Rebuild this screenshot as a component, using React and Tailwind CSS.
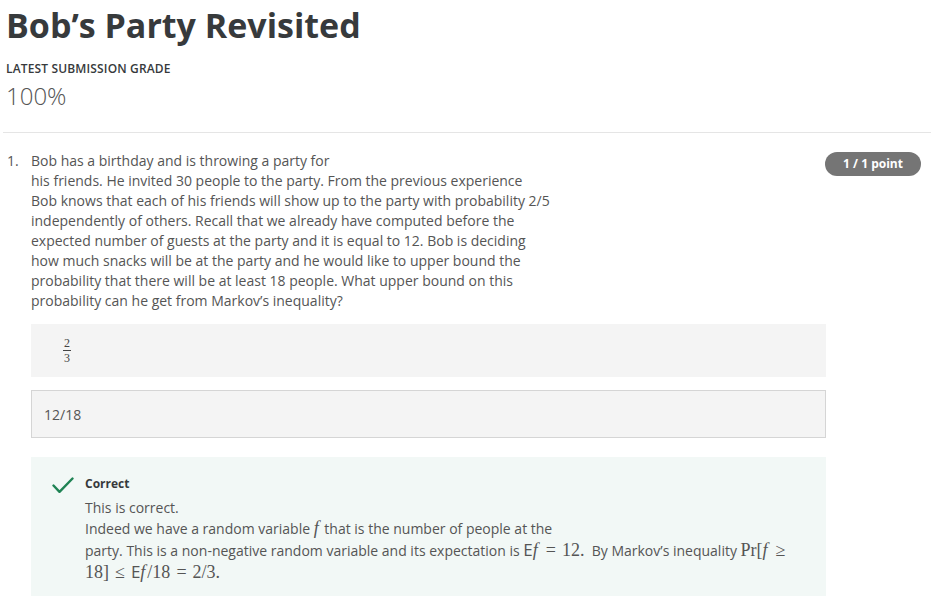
const serif = { fontFamily: '"Liberation Serif", "DejaVu Serif", serif' };

const questionLines = [
  "Bob has a birthday and is throwing a party for",
  "his friends. He invited 30 people to the party. From the previous experience",
  "Bob knows that each of his friends will show up to the party with probability 2/5",
  "independently of others. Recall that we already have computed before the",
  "expected number of guests at the party and it is equal to 12. Bob is deciding",
  "how much snacks will be at the party and he would like to upper bound the",
  "probability that there will be at least 18 people. What upper bound on this",
  "probability can he get from Markov’s inequality?",
];

const Fraction = () => (
  <span
    style={serif}
    className="inline-flex flex-col items-center text-[12px] leading-[11px] text-[#444]"
  >
    <span className="border-b border-[#444] px-[1px] pb-[1px]">2</span>
    <span className="pt-[2px]">3</span>
  </span>
);

const CheckMark = () => (
  <svg width="22" height="17" viewBox="0 0 22 17" className="mt-[2px] shrink-0">
    <polyline
      points="1.5,8.5 7.5,14.8 20.5,1.5"
      fill="none"
      stroke="#1f8354"
      strokeWidth="2.4"
      strokeLinecap="round"
      strokeLinejoin="round"
    />
  </svg>
);

// inline math bits, sized a bit larger than the text like katex
const M = ({ children }) => (
  <span style={serif} className="text-[18px]">
    {children}
  </span>
);

const F = () => <span className="italic mr-[2px]">f</span>;
const E = () => <span className="font-['Open_Sans',sans-serif] text-[17px]">E</span>;

const Feedback = () => (
  <div className="mt-[19px] w-[795px] h-[139px] bg-[#f2f8f6] pt-[18px] pl-[21px] flex gap-[11px]">
    <CheckMark />
    <div className="flex flex-col">
      <p className="text-[12px] font-bold text-[#373a3c] leading-[18px]">Correct</p>
      <p className="text-[14px] text-[#555] leading-[20px] mt-[5px]">This is correct.</p>
      <p className="text-[14px] text-[#555] leading-[21px]">
        Indeed we have a random variable <M><F /></M> that is the number of people at the
        <br />
        party. This is a non-negative random variable and its expectation is{" "}
        <M>
          <E />
          <F />
          <span className="mx-[6px]">=</span>12.
        </M>{" "}
        &nbsp;By Markov’s inequality{" "}
        <M>
          Pr[<F />
          <span className="ml-[6px]">≥</span>
        </M>
        <br />
        <M>
          18]<span className="mx-[6px]">≤</span>
          <E />
          <F />/18<span className="mx-[6px]">=</span>2/3.
        </M>
      </p>
    </div>
  </div>
);

export default function App() {
  return (
    <div className="bg-white w-[931px] h-[601px] overflow-hidden font-['Open_Sans',sans-serif] text-[#373a3c]">
      <div className="pl-[6px] pt-[2px]">
        <h1 className="text-[34px] font-bold leading-[46px] text-[#373a3c]">Bob’s Party Revisited</h1>
        <p className="mt-[13px] text-[12px] font-semibold uppercase leading-[16px] tracking-[0.15px] text-[#373a3c]">
          Latest Submission Grade
        </p>
        <p className="mt-[3px] text-[24px] font-light leading-[32px] text-[#555]">100%</p>
      </div>
      <div className="ml-[3px] mt-[20px] border-t border-[#e5e5e5]" />
      <div className="mt-[18px] flex">
        <span className="w-[31px] pl-[7px] text-[14px] leading-[20px] text-[#555]">1.</span>
        <div className="flex-1">
          <div className="flex justify-between">
            <p className="text-[14px] leading-[20px] text-[#555]">
              {questionLines.map((line, i) => (
                <span key={i}>
                  {line}
                  <br />
                </span>
              ))}
            </p>
            <span className="mr-[10px] mt-[1px] h-[24px] w-[96px] shrink-0 rounded-full bg-[#757575] text-white text-[12px] font-bold flex items-center justify-center">
              1 / 1 point
            </span>
          </div>
          <div className="mt-[13px] w-[795px] h-[53px] bg-[#f4f4f4] flex items-center pl-[32px]">
            <Fraction />
          </div>
          <div className="mt-[13px] w-[795px] h-[48px] bg-[#f4f4f4] border border-[#d5d5d5] flex items-center pl-[12px] text-[14px] text-[#555]">
            12/18
          </div>
          <Feedback />
        </div>
      </div>
    </div>
  );
}
